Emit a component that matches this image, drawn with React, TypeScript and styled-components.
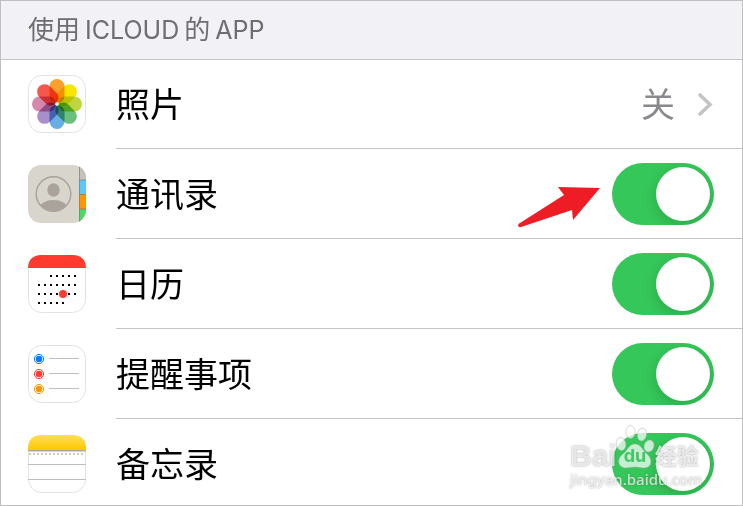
import React from 'react';
import styled, { createGlobalStyle } from 'styled-components';

const GlobalStyle = createGlobalStyle`
  * { box-sizing: border-box; }
  body {
    margin: 0;
    background: #fff;
    font-family: Inter, "Noto Sans CJK SC", sans-serif;
    color: #000;
  }
`;

const Page = styled.main`
  position: relative;
  min-height: 100vh;
  border: 1px solid #bfbfc1;
  background: #fff;
  overflow: hidden;
`;

const SectionHeader = styled.h1`
  display: flex;
  align-items: center;
  gap: 5px;
  height: 58px;
  margin: 0;
  padding: 0 27px;
  background: #f2f1f6;
  color: #6d6d72;
  font-size: 26px;
  line-height: 36px;
  font-weight: 400;
`;

const Latin = styled.span`
  font-size: 25px;
`;

const List = styled.ul`
  margin: 0;
  padding: 0;
  list-style: none;
  box-shadow: inset 0 1px #c4c4c6;
`;

const Row = styled.li`
  display: flex;
  align-items: stretch;
  gap: 30px;
  padding-left: 27px;
`;

const RowBody = styled.div<{ $last?: boolean }>`
  flex: 1;
  display: flex;
  align-items: center;
  justify-content: space-between;
  padding: 14px 28px ${p => (p.$last ? 10 : 13)}px 0;
  border-bottom: ${p => (p.$last ? 'none' : '1px solid #c4c4c6')};
`;

const AppIcon = styled.svg`
  display: block;
  flex: none;
  width: 58px;
  height: 58px;
  margin-top: 16px;
`;

const Label = styled.label`
  padding-top: 2px;
  font-size: 34px;
  line-height: 60px;
`;

const LinkRow = styled.a`
  flex: 1;
  display: flex;
  align-items: center;
  justify-content: space-between;
  color: inherit;
  text-decoration: none;
  font-size: 34px;
  line-height: 60px;
`;

const LinkText = styled.span`
  padding-top: 2px;
`;

const Value = styled.span`
  display: flex;
  align-items: center;
  gap: 21px;
  color: #8a8a8e;
`;

const Switch = styled.input`
  appearance: none;
  display: flex;
  flex: none;
  width: 102px;
  height: 62px;
  margin: 0;
  padding: 4px;
  border-radius: 31px;
  background: #e9e9eb;
  overflow: hidden;
  cursor: pointer;
  &::before {
    content: '';
    width: 54px;
    height: 54px;
    border-radius: 50%;
    background: #fff;
    box-shadow: 0 4px 14px rgba(0, 0, 0, 0.16);
  }
  &:checked {
    justify-content: flex-end;
    background: #35c759;
  }
`;

const Arrow = styled.svg`
  position: absolute;
  top: 183px;
  right: 141px;
  width: 84px;
  height: 46px;
`;

const Watermark = styled.div`
  position: absolute;
  right: 36px;
  bottom: 17px;
  width: 136px;
  color: rgba(255, 255, 255, 0.72);
  pointer-events: none;
  text-shadow: 0 0 2px rgba(80, 80, 80, 0.55);
`;

const MarkTop = styled.div`
  display: flex;
  align-items: flex-end;
  height: 46px;
  font-size: 30px;
  line-height: 28px;
  font-weight: 700;
`;

const MarkName = styled.span`
  font-family: "Liberation Sans", sans-serif;
`;

const MarkPaw = styled.span`
  position: relative;
  flex: none;
  width: 40px;
  height: 46px;
  margin-left: -2px;
`;

const PawShape = styled.svg`
  display: block;
  width: 40px;
  height: 46px;
`;

const PawText = styled.span`
  position: absolute;
  left: 9px;
  bottom: 4px;
  color: #45c667;
  font-size: 18px;
  line-height: 20px;
  font-weight: 700;
  text-shadow: none;
`;

const MarkWord = styled.span`
  font-size: 22px;
  white-space: nowrap;
`;

const MarkSite = styled.div`
  font-family: "Noto Sans", sans-serif;
  font-size: 15px;
  line-height: 18px;
  font-weight: 500;
`;

const PETALS: [string, number][] = [
  ['#f9a12c', 0],
  ['#f8e600', 45],
  ['#bfd73f', 90],
  ['#6bc07c', 135],
  ['#67aee2', 180],
  ['#a98fc8', 225],
  ['#d587ae', 270],
  ['#f5574c', 315],
];

const Petal = styled.path`
  mix-blend-mode: multiply;
`;

const PetalGroup = styled.g`
  isolation: isolate;
`;

const Tile = () => (
  <rect x="0.5" y="0.5" width="57" height="57" rx="13" fill="#fff" stroke="#e2e2e4" />
);

const PhotosIcon = () => (
  <AppIcon viewBox="0 0 58 58" aria-hidden="true">
    <Tile />
    <PetalGroup>
      {PETALS.map(([fill, angle]) => (
        <Petal
          key={angle}
          d="M21.5 11.5A7.5 7.5 0 0 1 36.5 11.5V21C36.5 25 33 28 29 28C25 28 21.5 25 21.5 21Z"
          fill={fill}
          transform={`rotate(${angle} 29 29)`}
        />
      ))}
    </PetalGroup>
    <circle cx="29" cy="29" r="1.8" fill="#fff" />
  </AppIcon>
);

const ContactsIcon = () => (
  <AppIcon viewBox="0 0 58 58" aria-hidden="true">
    <defs>
      <clipPath id="contacts-tile"><rect width="58" height="58" rx="13" /></clipPath>
      <clipPath id="contacts-face"><circle cx="25.5" cy="29" r="17" /></clipPath>
    </defs>
    <g clipPath="url(#contacts-tile)">
      <rect width="58" height="58" fill="#d8d5cc" />
      <rect x="51" width="7" height="15" fill="#c4c1b9" />
      <rect x="51" y="15" width="7" height="14" fill="#5ac8fa" />
      <rect x="51" y="29" width="7" height="15" fill="#ff9500" />
      <rect x="51" y="44" width="7" height="14" fill="#4cd964" />
      <path d="M51.5 0V58M51 15H58M51 29.5H58M51 44H58" stroke="#77736c" strokeOpacity="0.6" />
      <circle cx="25.5" cy="29" r="17.3" fill="none" stroke="#aaa39b" strokeWidth="1.5" />
      <ellipse cx="25.5" cy="25" rx="6.2" ry="6.8" fill="#aaa39b" />
      <ellipse cx="25.5" cy="43.5" rx="14" ry="8.5" fill="#aaa39b" clipPath="url(#contacts-face)" />
    </g>
  </AppIcon>
);

const DOT_ROWS = [
  { y: 20, from: 2, to: 6 },
  { y: 29, from: 0, to: 6 },
  { y: 38, from: 0, to: 6 },
  { y: 47, from: 0, to: 4 },
];

const CalendarIcon = () => (
  <AppIcon viewBox="0 0 58 58" aria-hidden="true">
    <Tile />
    <path d="M0 13C0 5 5 0 13 0H45C53 0 58 5 58 13Z" fill="#ff3b30" />
    {DOT_ROWS.map(row =>
      Array.from({ length: row.to - row.from + 1 }, (_, i) => (
        <rect key={`${row.y}-${i}`} x={10 + (row.from + i) * 6} y={row.y} width="2" height="2" />
      )),
    )}
    <circle cx="35" cy="39" r="4" fill="#ff3b30" />
  </AppIcon>
);

const REMINDERS: [number, string][] = [
  [14, '#007aff'],
  [29, '#ff3b30'],
  [44, '#ff9500'],
];

const RemindersIcon = () => (
  <AppIcon viewBox="0 0 58 58" aria-hidden="true">
    <Tile />
    {REMINDERS.map(([y, color]) => (
      <g key={y}>
        <circle cx="11" cy={y} r="4.6" fill="none" stroke={color} />
        <circle cx="11" cy={y} r="3.2" fill={color} />
        <path d={`M21 ${y - 0.5}H51`} stroke="#bfbfc2" />
      </g>
    ))}
  </AppIcon>
);

const NotesIcon = () => (
  <AppIcon viewBox="0 0 58 58" aria-hidden="true">
    <defs>
      <linearGradient id="notes-band" x2="0" y2="1">
        <stop stopColor="#ffdf58" />
        <stop offset="1" stopColor="#fdc800" />
      </linearGradient>
    </defs>
    <Tile />
    <path d="M0 15V13C0 5 5 0 13 0H45C53 0 58 5 58 13V15Z" fill="url(#notes-band)" />
    <path d="M0 15.5H58" stroke="#aaa8a5" />
    <path d="M0 16.5H58" stroke="#d6d4d4" />
    <path d="M1 19H57" stroke="#cdcdcd" strokeWidth="2" strokeDasharray="2 2" />
    <path d="M0 29.5H58M0 44.5H58" stroke="#bdbdc0" />
  </AppIcon>
);

const Chevron = () => (
  <svg width="18" height="26" viewBox="0 0 18 26" aria-hidden="true">
    <path d="M4 4L14 13.5L4 23" fill="none" stroke="#c4c4c6" strokeWidth="3.6" strokeLinecap="round" />
  </svg>
);

const APPS = [
  { id: 'contacts', label: '通讯录', Icon: ContactsIcon },
  { id: 'calendar', label: '日历', Icon: CalendarIcon },
  { id: 'reminders', label: '提醒事项', Icon: RemindersIcon },
  { id: 'notes', label: '备忘录', Icon: NotesIcon },
];

export default function App() {
  return (
    <>
      <GlobalStyle />
      <Page lang="zh-CN">
        <SectionHeader>
          <span>使用</span>
          <Latin>ICLOUD</Latin>
          <span>的</span>
          <Latin>APP</Latin>
        </SectionHeader>
        <List>
          <Row>
            <PhotosIcon />
            <RowBody>
              <LinkRow href="#photos">
                <LinkText>照片</LinkText>
                <Value>
                  <LinkText>关</LinkText>
                  <Chevron />
                </Value>
              </LinkRow>
            </RowBody>
          </Row>
          {APPS.map(({ id, label, Icon }, i) => (
            <Row key={id}>
              <Icon />
              <RowBody $last={i === APPS.length - 1}>
                <Label htmlFor={id}>{label}</Label>
                <Switch id={id} type="checkbox" role="switch" defaultChecked />
              </RowBody>
            </Row>
          ))}
        </List>
        <Arrow viewBox="0 0 84 46" aria-hidden="true">
          <path
            d="M41 3L83 4L56 36L55 26L4 43C1 44 0 40 3 39L47 11Z"
            fill="#ee1c24"
          />
        </Arrow>
        <Watermark>
          <MarkTop>
            <MarkName>Bai</MarkName>
            <MarkPaw>
              <PawShape viewBox="0 0 40 46" aria-hidden="true">
                <g fill="#fff" fillOpacity="0.72" stroke="#aaa" strokeOpacity="0.45">
                  <ellipse cx="6" cy="20" rx="4.8" ry="6.5" transform="rotate(-10 6 20)" />
                  <ellipse cx="15.5" cy="8" rx="4.6" ry="6.5" />
                  <ellipse cx="27" cy="10.5" rx="4.6" ry="6.5" transform="rotate(12 27 10.5)" />
                  <ellipse cx="34" cy="22" rx="4.8" ry="6" transform="rotate(20 34 22)" />
                  <path d="M20 20C26 20 27 26 32 30C38 35 37 44 29 44C26 44 24 43 20 43C16 43 13 44 10 44C2 43 2 34 8 30C13 26 14 20 20 20Z" />
                </g>
              </PawShape>
              <PawText>du</PawText>
            </MarkPaw>
            <MarkWord>经验</MarkWord>
          </MarkTop>
          <MarkSite>jingyan.baidu.com</MarkSite>
        </Watermark>
      </Page>
    </>
  );
}
